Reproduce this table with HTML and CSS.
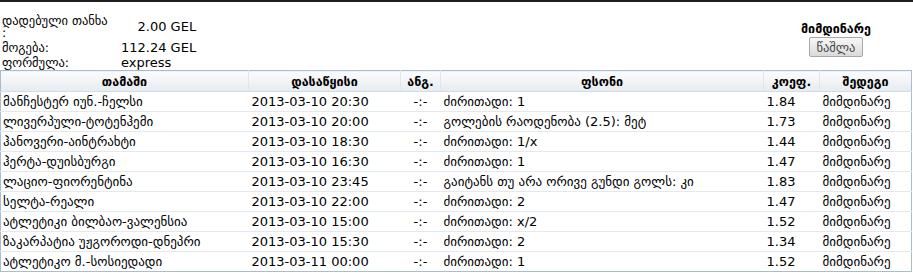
FILE: index.html
```html
<!DOCTYPE html>
<html lang="ka">
<head>
<meta charset="utf-8">
<title>ბილეთი</title>
<link rel="stylesheet" href="styles.css">
</head>
<body>
<div class="page">
  <div class="summary">
    <div class="info">
      <div class="lbl">დადებული თანხა :</div>
      <div class="val val-right">2.00 GEL</div>
      <div class="lbl">მოგება:</div>
      <div class="val">112.24 GEL</div>
      <div class="lbl">ფორმულა:</div>
      <div class="val">express</div>
    </div>
    <div class="status">
      <div class="status-title">მიმდინარე</div>
      <button class="btn" type="button">წაშლა</button>
    </div>
  </div>
  <table class="bets">
    <colgroup>
      <col class="c-game"><col class="c-start"><col class="c-score"><col class="c-bet"><col class="c-odd"><col class="c-res">
    </colgroup>
    <thead>
      <tr><th>თამაში</th><th>დასაწყისი</th><th>ანგ.</th><th>ფსონი</th><th>კოეფ.</th><th>შედეგი</th></tr>
    </thead>
    <tbody>
      <tr><td>მანჩესტერ იუნ.-ჩელსი</td><td>2013-03-10 20:30</td><td class="sc">-:-</td><td>ძირითადი: 1</td><td>1.84</td><td>მიმდინარე</td></tr>
      <tr><td>ლივერპული-ტოტენჰემი</td><td>2013-03-10 20:00</td><td class="sc">-:-</td><td>გოლების რაოდენობა (2.5): მეტ</td><td>1.73</td><td>მიმდინარე</td></tr>
      <tr><td>ჰანოვერი-აინტრახტი</td><td>2013-03-10 18:30</td><td class="sc">-:-</td><td>ძირითადი: 1/x</td><td>1.44</td><td>მიმდინარე</td></tr>
      <tr><td>ჰერტა-დუისბურგი</td><td>2013-03-10 16:30</td><td class="sc">-:-</td><td>ძირითადი: 1</td><td>1.47</td><td>მიმდინარე</td></tr>
      <tr><td>ლაციო-ფიორენტინა</td><td>2013-03-10 23:45</td><td class="sc">-:-</td><td>გაიტანს თუ არა ორივე გუნდი გოლს: კი</td><td>1.83</td><td>მიმდინარე</td></tr>
      <tr><td>სელტა-რეალი</td><td>2013-03-10 22:00</td><td class="sc">-:-</td><td>ძირითადი: 2</td><td>1.47</td><td>მიმდინარე</td></tr>
      <tr><td>ატლეტიკი ბილბაო-ვალენსია</td><td>2013-03-10 15:00</td><td class="sc">-:-</td><td>ძირითადი: x/2</td><td>1.52</td><td>მიმდინარე</td></tr>
      <tr><td>ზაკარპატია უჟგოროდი-დნეპრი</td><td>2013-03-10 15:30</td><td class="sc">-:-</td><td>ძირითადი: 2</td><td>1.34</td><td>მიმდინარე</td></tr>
      <tr><td>ატლეტიკო მ.-სოსიედადი</td><td>2013-03-11 00:00</td><td class="sc">-:-</td><td>ძირითადი: 1</td><td>1.52</td><td>მიმდინარე</td></tr>
    </tbody>
  </table>
</div>
</body>
</html>
```

FILE: styles.css
```css
html, body {
  margin: 0;
  padding: 0;
  background: #fff;
}
body {
  font-family: "DejaVu Sans", Verdana, sans-serif;
  font-size: 13px;
  color: #000;
}
.page {
  border-top: 2px solid #1e1e1e;
  width: 913px;
}
.summary {
  display: flex;
  justify-content: space-between;
  align-items: flex-start;
  height: 68px;
}
.info {
  display: grid;
  grid-template-columns: 112px auto;
  column-gap: 7px;
  row-gap: 3px;
  padding: 13px 0 0 2px;
  line-height: 12px;
}
.lbl {
  font-size: 12.5px;
}
.val {
  align-self: center;
  font-size: 13px;
}
.val-right {
  text-align: right;
}
.status {
  display: flex;
  flex-direction: column;
  align-items: center;
  margin: 20px 42px 0 0;
  gap: 1px;
}
.status-title {
  font-weight: bold;
  font-size: 12.5px;
  line-height: 14px;
}
.btn {
  font-family: "DejaVu Sans", Verdana, sans-serif;
  font-size: 12.5px;
  color: #444;
  height: 20px;
  padding: 0 7px;
  border: 1px solid #a8a8a8;
  border-radius: 2px;
  background: linear-gradient(#f7f7f7, #dadada);
}
.bets {
  border-collapse: collapse;
  table-layout: fixed;
  width: 911px;
  border: 1px solid #a9bcd2;
}
.c-game { width: 248px; }
.c-start { width: 152px; }
.c-score { width: 40px; }
.c-bet { width: 323px; }
.c-odd { width: 56px; }
.c-res { width: 92px; }
.bets th {
  font-weight: bold;
  font-size: 12.5px;
  height: 20px;
  padding: 0;
  text-align: center;
  background: linear-gradient(#fbfcfd, #e6ebf0);
  border-left: 1px solid #e2e7ed;
  border-bottom: 1px solid #d3dbe4;
}
.bets th:first-child { border-left: none; }
.bets td {
  height: 19px;
  padding: 0 0 0 3px;
  border-top: 1px solid #e4e9ef;
  white-space: nowrap;
  overflow: hidden;
}
.bets td:first-child { padding-left: 2px; }
.bets td.sc {
  text-align: center;
  padding: 0;
}
```
